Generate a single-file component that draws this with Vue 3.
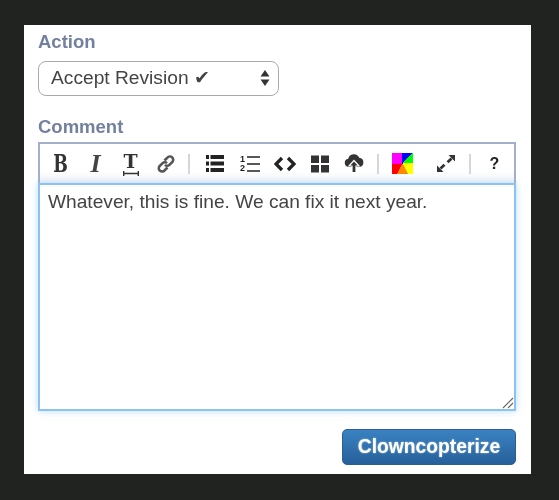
<template>
  <div class="card">
    <label class="label action-label">Action</label>
    <div class="select">
      <span>Accept Revision ✔</span>
      <svg class="arrows" width="10" height="18" viewBox="0 0 10 18">
        <path d="M5 1 9.500 7.500H.5z" fill="#333" />
        <path d="M.5 10.500h9L5 17z" fill="#333" />
      </svg>
    </div>

    <label class="label comment-label">Comment</label>
    <div class="toolbar">
      <span class="tool glyph bold">B</span>
      <span class="tool glyph italic">I</span>
      <span class="tool glyph tee">T
        <svg class="tee-bar" width="16" height="5" viewBox="0 0 16 5">
          <path d="M.7 0v5M15.300 0v5M1 2.500h14" stroke="#333" stroke-width="1.400" fill="none" />
        </svg>
      </span>
      <span class="tool">
        <svg width="18" height="18" viewBox="0 0 18 18" fill="none" stroke="#555" stroke-width="2.600">
          <path d="M7.500 5.500 10.400 2.600a3.100 3.100 0 0 1 5 4.200l-3 3a3.100 3.100 0 0 1-4.400 0" />
          <path d="M10.500 12.500 7.600 15.400a3.100 3.100 0 0 1-5-4.200l3-3a3.100 3.100 0 0 1 4.400 0" />
        </svg>
      </span>
      <i class="sep"></i>
      <span class="tool">
        <svg width="18" height="17" viewBox="0 0 18 17" fill="#222">
          <path d="M0 0h3v4H0zM4.500 0H18v4H4.500zM0 6.500h3v4H0zM4.500 6.500H18v4H4.500zM0 13h3v4H0zM4.500 13H18v4H4.500z" />
        </svg>
      </span>
      <span class="tool">
        <svg width="20" height="18" viewBox="0 0 20 18">
          <path d="M7 2h13M7 9h13M7 16h13" stroke="#222" stroke-width="1.600" />
          <text x="0" y="7" class="num">1</text>
          <text x="0" y="16" class="num">2</text>
        </svg>
      </span>
      <span class="tool">
        <svg width="22" height="16" viewBox="0 0 22 16" fill="none" stroke="#222" stroke-width="3.300">
          <path d="M8 2 2 8l6 6M14 2l6 6-6 6" />
        </svg>
      </span>
      <span class="tool">
        <svg width="18" height="18" viewBox="0 0 18 18" fill="#333">
          <path d="M0 .5h8v7.500H0zM10 .5h8v7.500h-8zM0 10h8v7.500H0zM10 10h8v7.500h-8z" />
        </svg>
      </span>
      <span class="tool cloud">
        <svg width="20" height="19" viewBox="0 0 20 19" fill="#333">
          <path d="M4.500 13a4.200 4.200 0 0 1-.3-8.300 5.800 5.800 0 0 1 11-1 4.700 4.700 0 0 1 .3 9.300z" />
          <path d="M10 6.500 15 12h-3v6.500H8V12H5z" stroke="#fff" stroke-width="1.200" />
        </svg>
      </span>
      <i class="sep mid"></i>
      <span class="swatch"></span>
      <span class="tool expand">
        <svg width="20" height="19" viewBox="0 0 20 19" fill="#333" stroke="#333">
          <path d="M12.500 1H19v6.500z" stroke="none" />
          <path d="M7.500 18H1v-6.500z" stroke="none" />
          <path d="M15.500 4.500 11.500 8.200M4.500 14.500 8.500 10.800" stroke-width="2.800" />
        </svg>
      </span>
      <i class="sep last"></i>
      <span class="tool glyph help">?</span>
    </div>
    <div class="editor-wrap">
      <textarea class="editor" spellcheck="false">Whatever, this is fine. We can fix it next year.</textarea>
      <svg class="grip" width="12" height="12" viewBox="0 0 12 12" fill="none" stroke="#666" stroke-width="1.100">
        <path d="M1 11 11 1M6 11l5-5" />
      </svg>
    </div>
    <div class="actions">
      <button class="submit" type="button">Clowncopterize</button>
    </div>
  </div>
</template>

<script setup>
</script>

<style>
html,
body {
  background: #212321;
}
</style>

<style scoped>
.card {
  box-sizing: border-box;
  width: 507px;
  height: 449px;
  margin: 25px 0 0 24px;
  padding: 7px 15px 0 14px;
  background: #fff;
  font-family: "Liberation Sans", Arial, sans-serif;
  color: #444;
  overflow: hidden;
  filter: blur(0.35px);
}

.label {
  display: block;
  font-size: 18.500px;
  line-height: 20px;
  font-weight: bold;
  color: #74809f;
}

.select {
  box-sizing: border-box;
  display: flex;
  align-items: center;
  justify-content: space-between;
  width: 241px;
  height: 35px;
  margin-top: 9px;
  padding: 0 8px 2px 12px;
  border: 1px solid #aaa;
  border-radius: 8px;
  font-size: 19.200px;
}

.comment-label {
  margin-top: 21px;
}

.toolbar {
  box-sizing: border-box;
  display: flex;
  align-items: center;
  height: 41px;
  margin-top: 5px;
  padding: 0 0 0 3px;
  border: 2px solid #a3afcc;
  border-bottom: 0;
  background: linear-gradient(#fff 70%, #f2f4f7);
}

.tool {
  position: relative;
  display: flex;
  align-items: center;
  justify-content: center;
  flex: none;
  width: 35px;
  height: 24px;
}

.glyph {
  color: #333;
  font-size: 20px;
}

.bold {
  font-family: "DejaVu Serif", serif;
  font-weight: bold;
  font-size: 24px;
  transform: scaleX(0.72);
}

.italic {
  font-family: "Liberation Serif", serif;
  font-style: italic;
  font-weight: bold;
  font-size: 26px;
  color: #444;
}

.tee {
  font-family: "DejaVu Serif", serif;
  font-weight: bold;
  font-size: 19px;
  padding-bottom: 6px;
  box-sizing: border-box;
}

.tee-bar {
  position: absolute;
  left: 10px;
  bottom: 0;
}

.cloud {
  width: 33px;
}

.help {
  font-family: "Liberation Sans", sans-serif;
  font-weight: bold;
  font-size: 16px;
  color: #222;
}

.num {
  font: bold 9px "Liberation Sans", sans-serif;
  fill: #222;
}

.sep {
  flex: none;
  width: 2px;
  height: 20px;
  margin: 0 7px 0 5px;
  background: #d3d6da;
}

.sep.mid {
  margin-left: 7px;
}

.sep.last {
  margin-left: 6px;
  margin-right: 6px;
}

.swatch {
  flex: none;
  width: 21px;
  height: 21px;
  margin: 0 16px 0 6px;
  background: conic-gradient(#00f 0 12%, #0f0 12% 25%, #ff0 25% 42%, #f80 42% 58%, #f00 58% 75%, #f0f 75% 100%);
}

.expand {
  width: 34px;
}

.editor-wrap {
  position: relative;
}

.editor {
  box-sizing: border-box;
  display: block;
  width: 478px;
  height: 228px;
  padding: 5px 8px;
  border: 2px solid #8cc3f2;
  border-radius: 0;
  outline: 0;
  resize: none;
  box-shadow: 0 0 7px rgba(130, 190, 240, 0.55);
  font-family: "Liberation Sans", Arial, sans-serif;
  font-size: 19.150px;
  line-height: 24px;
  color: #444;
}

.grip {
  position: absolute;
  right: 2px;
  bottom: 2px;
}

.actions {
  display: flex;
  justify-content: flex-end;
  margin-top: 18px;
}

.submit {
  box-sizing: border-box;
  width: 174px;
  height: 36px;
  padding: 0;
  border: 1px solid #2b5f92;
  border-radius: 5px;
  background: linear-gradient(#3a82c2, #26609a);
  color: #fff;
  font-family: "Liberation Sans", Arial, sans-serif;
  font-size: 19.300px;
  font-weight: bold;
  text-shadow: 0 0 2px rgba(255, 255, 255, 0.6);
}
</style>
